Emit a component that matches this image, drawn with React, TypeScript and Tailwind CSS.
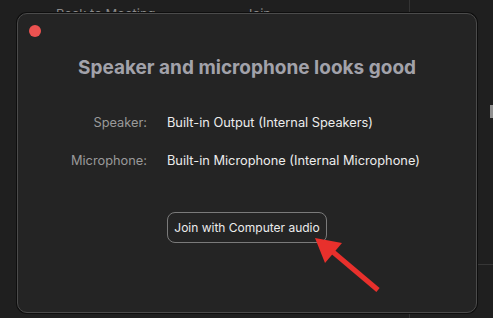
import React from "react";

const font = { fontFamily: "Inter, 'Noto Sans', 'Liberation Sans', sans-serif" };

function Arrow() {
  return (
    <svg className="pointer-events-none absolute left-0 top-0" width="493" height="318" viewBox="0 0 493 318">
      <line x1="378" y1="290" x2="333" y2="252" stroke="#e8302c" strokeWidth="5" />
      <polygon points="315,238 342,243 325,263" fill="#e8302c" />
    </svg>
  );
}

export default function App() {
  return (
    <div className="relative h-[318px] w-[493px] overflow-hidden bg-[#1f1f1f]" style={font}>
      {/* page behind the dialog */}
      <div className="flex h-full">
        <div className="flex h-full w-[410px] flex-col border-r border-[#343434]">
          <div className="flex pt-[5px] text-[13px] text-[#8a8a8a]">
            <span className="ml-[56px] w-[189px]">Back to Meeting</span>
            <span>Join</span>
          </div>
        </div>
        <div className="flex flex-1 flex-col">
          <div className="h-[264px]" />
          <div className="border-t border-[#363636]" />
        </div>
      </div>
      <div className="absolute right-0 top-[105px] h-[13px] w-[3px] bg-[#8f8f8f]" />

      {/* dialog */}
      <div className="absolute left-[17px] top-[13px] flex h-[300px] w-[460px] flex-col rounded-[10px] border border-[#4b4b4b] bg-[#242424] shadow-[0_0_0_1px_#0e0e0e]">
        <div className="pl-[11px] pt-[11px]">
          <div className="h-3 w-3 rounded-full bg-[#ec5250]" />
        </div>
        <h1 className="mt-[19px] text-center text-[19px] font-bold leading-6 text-[#a2a2aa]">
          Speaker and microphone looks good
        </h1>
        <div className="mt-[33px] grid grid-cols-[129px_1fr] gap-x-5 gap-y-[18px] text-[12.8px] leading-5">
          <span className="text-right text-[#9a9a9a]">Speaker:</span>
          <span className="text-[#ececec]">Built-in Output (Internal Speakers)</span>
          <span className="text-right text-[#9a9a9a]">Microphone:</span>
          <span className="text-[#ececec]">Built-in Microphone (Internal Microphone)</span>
        </div>
        <div className="mt-[41px] flex justify-center">
          <button className="h-[31px] w-[160px] rounded-lg border border-[#7a7a7a] text-[12px] text-[#ececec]">
            Join with Computer audio
          </button>
        </div>
      </div>

      <Arrow />
    </div>
  );
}
